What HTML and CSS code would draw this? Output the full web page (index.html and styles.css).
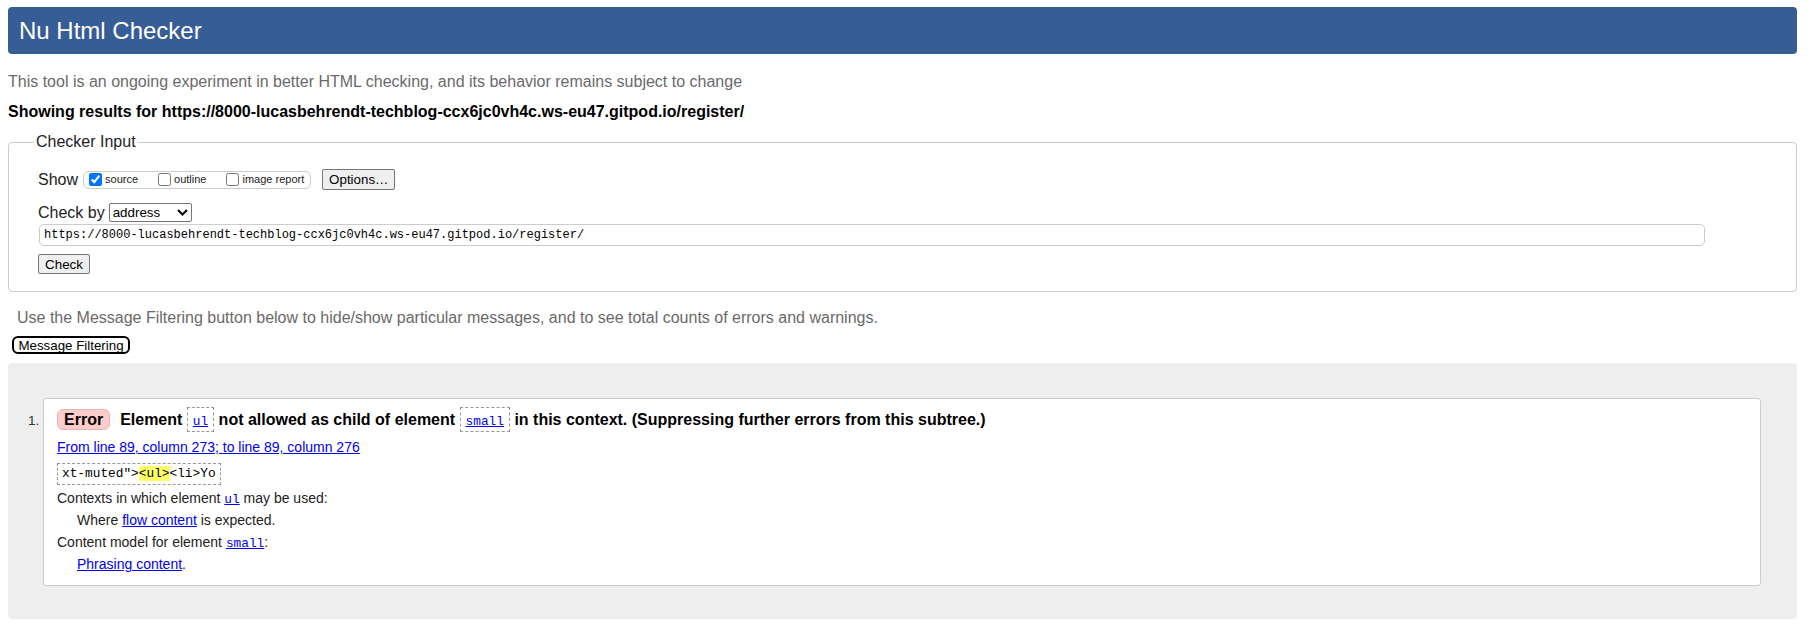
FILE: index.html
```html
<!DOCTYPE html>
<html lang="en">
<head>
<meta charset="utf-8">
<title>Showing results for https://8000-lucasbehrendt-techblog-ccx6jc0vh4c.ws-eu47.gitpod.io/register/ - Nu Html Checker</title>
<link rel="stylesheet" href="styles.css">
</head>
<body>
<h1 class="title">Nu Html Checker</h1>
<p class="intro">This tool is an ongoing experiment in better HTML checking, and its behavior remains subject to change</p>
<p class="showing">Showing results for https://8000-lucasbehrendt-techblog-ccx6jc0vh4c.ws-eu47.gitpod.io/register/</p>
<form class="checker">
  <fieldset class="checker-input">
    <legend>Checker Input</legend>
    <div class="show-row">
      <span class="label">Show</span>
      <span class="show-opts">
        <label class="opt"><input type="checkbox" checked>source</label>
        <label class="opt"><input type="checkbox">outline</label>
        <label class="opt"><input type="checkbox">image report</label>
      </span>
      <button type="button" class="btn btn-options">Options…</button>
    </div>
    <div class="checkby-row">
      <span class="label">Check by</span>
      <span class="select-wrap">
        <select class="select"><option>address</option></select>
        <svg class="chev" width="11" height="7" viewBox="0 0 11 7"><polyline points="1,1 5.5,5.5 10,1" fill="none" stroke="#000" stroke-width="2"/></svg>
      </span>
    </div>
    <input class="url" type="text" value="https://8000-lucasbehrendt-techblog-ccx6jc0vh4c.ws-eu47.gitpod.io/register/">
    <div class="submit-row"><button type="button" class="btn btn-check">Check</button></div>
  </fieldset>
</form>
<p class="filter-note">Use the Message Filtering button below to hide/show particular messages, and to see total counts of errors and warnings.</p>
<button type="button" class="filter-btn">Message Filtering</button>
<div class="results">
  <ol class="messages">
    <li class="msg">
      <p class="msg-head"><strong class="badge">Error</strong>Element <code class="box"><a href="#">ul</a></code> not allowed as child of element <code class="box"><a href="#">small</a></code> in this context. (Suppressing further errors from this subtree.)</p>
      <p class="location"><a href="#">From line 89, column 273; to line 89, column 276</a></p>
      <p class="extract"><code class="ext">xt-muted"&gt;<b class="hl">&lt;ul&gt;</b>&lt;li&gt;Yo</code></p>
      <dl class="details">
        <dt>Contexts in which element <a href="#"><code>ul</code></a> may be used:</dt>
        <dd>Where <a href="#">flow content</a> is expected.</dd>
        <dt>Content model for element <a href="#"><code>small</code></a>:</dt>
        <dd><a href="#">Phrasing content</a>.</dd>
      </dl>
    </li>
  </ol>
</div>
</body>
</html>
```

FILE: styles.css
```css
* { box-sizing: border-box; }
html, body { margin: 0; }
body {
  padding: 7px 18px 8px 8px;
  font-family: "Liberation Sans", Arial, sans-serif;
  color: #000;
  background: #fff;
}
a { color: #00e; text-decoration: underline; }

.title {
  margin: 0;
  height: 47px;
  line-height: 47px;
  padding: 0 11px;
  font-size: 24px;
  font-weight: normal;
  color: #fff;
  background: #365d95;
  border-radius: 4px;
}
.intro {
  margin: 19px 0 0;
  font-size: 16px;
  line-height: 18px;
  color: #6a6a6a;
}
.showing {
  margin: 12px 0 0;
  font-size: 16px;
  line-height: 18px;
  font-weight: bold;
}

.checker { margin: 12px 0 0; }
.checker-input {
  margin: 0;
  min-width: 0;
  padding: 18px 29px 17px;
  border: 1px solid #ccc;
  border-radius: 4px;
}
.checker-input legend {
  padding: 0 2px;
  margin-left: -4px;
  font-size: 16px;
  line-height: 18px;
  color: #222;
}
.label { font-size: 16px; line-height: 18px; color: #222; }

.show-row {
  display: flex;
  align-items: center;
  height: 21px;
}
.show-opts {
  display: flex;
  align-items: center;
  gap: 16px;
  height: 18px;
  margin-left: 5px;
  padding: 0 6px 0 1px;
  border: 1px solid #ccc;
  border-radius: 6px;
}
.opt {
  display: flex;
  align-items: center;
  font-size: 11px;
  line-height: 13px;
  color: #222;
}
.opt input {
  width: 13px;
  height: 13px;
  margin: 0 3px 0 4px;
}
.btn {
  padding: 0;
  font-family: "Liberation Sans", Arial, sans-serif;
  font-size: 13.33px;
  color: #000;
  background: #efefef;
  border: 1px solid #767676;
  border-radius: 2px;
}
.btn-options { margin-left: 11px; width: 73px; height: 21px; }

.checkby-row {
  display: flex;
  align-items: center;
  height: 19px;
  margin-top: 13px;
}
.select-wrap {
  position: relative;
  display: inline-block;
  margin-left: 4px;
  height: 19px;
}
.select {
  appearance: none;
  -webkit-appearance: none;
  display: block;
  width: 83px;
  height: 19px;
  margin: 0;
  padding: 0 0 0 3px;
  font-family: "Liberation Sans", Arial, sans-serif;
  font-size: 13.33px;
  color: #000;
  background: #fff;
  border: 1px solid #767676;
  border-radius: 2px;
}
.chev {
  position: absolute;
  right: 4px;
  top: 6px;
  pointer-events: none;
}
.url {
  display: block;
  width: calc(100% - 63px);
  height: 22px;
  margin: 2px 0 0 1px;
  padding: 0 4px;
  font-family: "Liberation Mono", "DejaVu Sans Mono", monospace;
  font-size: 12px;
  color: #000;
  border: 1px solid #ccc;
  border-radius: 5px;
}
.submit-row { margin-top: 8px; height: 20px; }
.btn-check { display: block; width: 52px; height: 20px; }

.filter-note {
  margin: 17px 0 0 9px;
  font-size: 16px;
  line-height: 18px;
  color: #6a6a6a;
}
.filter-btn {
  display: block;
  width: 118px;
  height: 18px;
  margin: 9px 0 0 4px;
  padding: 0;
  font-family: "Liberation Sans", Arial, sans-serif;
  font-size: 13.33px;
  color: #000;
  background: #fff;
  border: 2px solid #000;
  border-radius: 6px;
}

.results {
  margin-top: 9px;
  padding: 35px 36px 33px 35px;
  background: #eee;
  border-radius: 4px;
}
.messages {
  margin: 0;
  padding: 0;
  list-style: decimal outside;
}
.msg {
  padding: 8px 13px 10px;
  background: #fff;
  border: 1px solid #ccc;
  border-radius: 3px;
  font-size: 14px;
}
.msg::marker {
  font-size: 13.5px;
  color: #333;
}
.msg-head {
  margin: 0;
  font-size: 16px;
  line-height: 21px;
  font-weight: bold;
}
.badge {
  display: inline-block;
  margin-right: 10px;
  padding: 0 6px;
  line-height: 19px;
  background: #fcc;
  border: 1px solid #e6b3b3;
  border-radius: 6px;
}
.box {
  display: inline-block;
  padding: 6px 5px 2px;
  line-height: 15px;
  font-family: "Liberation Mono", "DejaVu Sans Mono", monospace;
  font-size: 12.8px;
  font-weight: normal;
  border: 1px dashed #999;
}
.location {
  margin: 5px 0 0;
  line-height: 21px;
}
.extract { margin: 3px 0 0; line-height: 22px; height: 22px; }
.ext {
  display: inline-block;
  padding: 0 4px;
  line-height: 20px;
  font-family: "Liberation Mono", "DejaVu Sans Mono", monospace;
  font-size: 12.8px;
  border: 1px dashed #999;
}
.hl { font-weight: normal; background: #ff6; }
.details {
  margin: 5px 0 0;
  line-height: 21.33px;
  color: #222;
}
.details dd { margin: 0 0 0 20px; }
.details code {
  font-family: "Liberation Mono", "DejaVu Sans Mono", monospace;
  font-size: 12.8px;
}
```
